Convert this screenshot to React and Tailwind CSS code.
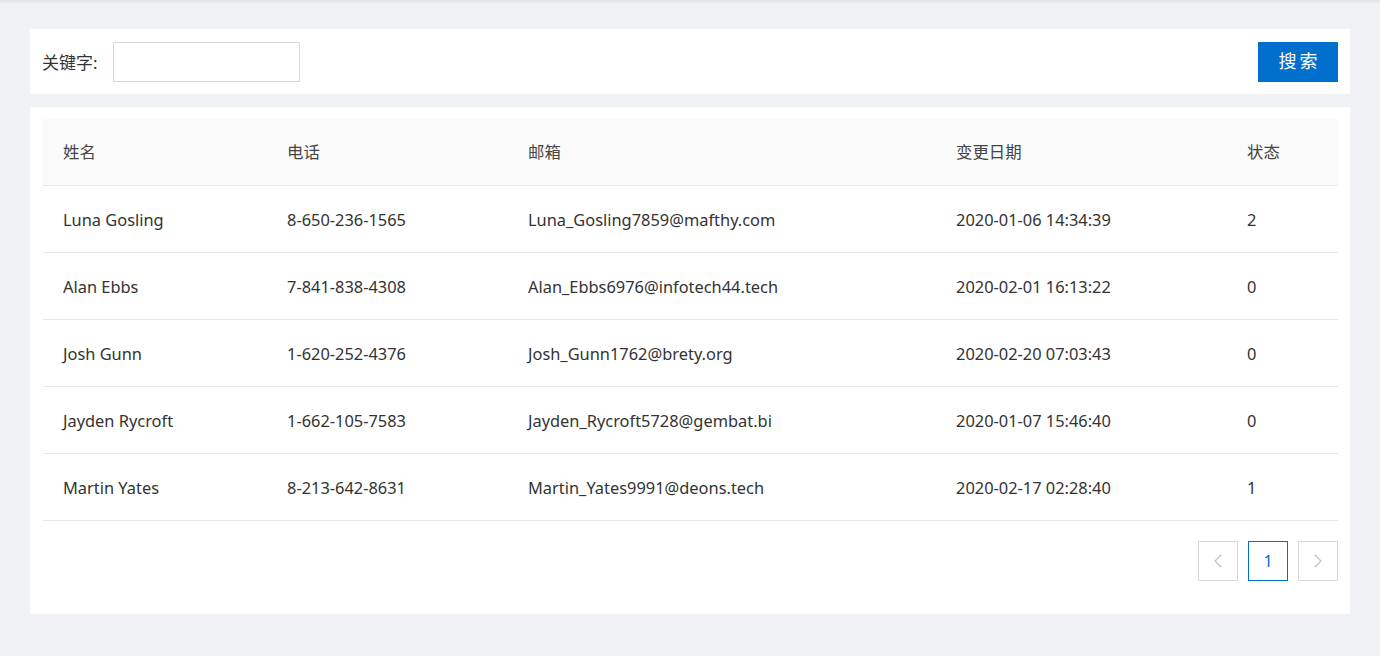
import { ChevronLeft, ChevronRight } from "lucide-react";

const rows = [
  ["Luna Gosling", "8-650-236-1565", "Luna_Gosling7859@mafthy.com", "2020-01-06 14:34:39", "2"],
  ["Alan Ebbs", "7-841-838-4308", "Alan_Ebbs6976@infotech44.tech", "2020-02-01 16:13:22", "0"],
  ["Josh Gunn", "1-620-252-4376", "Josh_Gunn1762@brety.org", "2020-02-20 07:03:43", "0"],
  ["Jayden Rycroft", "1-662-105-7583", "Jayden_Rycroft5728@gembat.bi", "2020-01-07 15:46:40", "0"],
  ["Martin Yates", "8-213-642-8631", "Martin_Yates9991@deons.tech", "2020-02-17 02:28:40", "1"],
];

const cols = "grid grid-cols-[224px_241px_428px_291px_1fr]";

export default function App() {
  return (
    <div
      className="min-h-[656px] bg-[#f0f2f5] text-[#333] relative"
      style={{ fontFamily: '"Noto Sans", "Noto Sans CJK SC", sans-serif' }}
    >
      <div className="h-[4px] bg-gradient-to-b from-[#e2e4e8] to-[#f0f2f5]" />
      <div className="px-[30px] pt-[25px]">
        {/* search bar */}
        <div className="bg-white h-[65px] pl-[12px] pr-[12px] flex items-center justify-between">
          <div className="flex items-center">
            <span className="text-[17px] w-[71px] pt-[2px]">关键字:</span>
            <input className="w-[187px] h-[40px] border border-[#d9d9d9] outline-none px-2" />
          </div>
          <button className="w-[80px] h-[40px] bg-[#0070cc] text-white text-[18px] tracking-[3px] pl-[3px]">
            搜索
          </button>
        </div>

        {/* table */}
        <div className="bg-white mt-[13px] pl-[13px] pr-[12px] pt-[12px] h-[507px]">
          <div className={`${cols} h-[67px] items-center bg-[#fafafa] border-b border-[#e8e8e8] text-[16.4px] text-[#444]`}>
            <div className="pl-[20px]">姓名</div>
            <div className="pl-[20px]">电话</div>
            <div className="pl-[20px]">邮箱</div>
            <div className="pl-[20px]">变更日期</div>
            <div className="pl-[20px]">状态</div>
          </div>
          {rows.map((r) => (
            <div key={r[0]} className={`${cols} h-[67px] items-center border-b border-[#e8e8e8] text-[16.4px] pt-[2px]`}>
              {r.map((c, i) => (
                <div key={i} className="pl-[20px]">{c}</div>
              ))}
            </div>
          ))}
          <div className="flex justify-end gap-[10px] mt-[20px]">
            <div className="w-[40px] h-[40px] border border-[#d9d9d9] flex items-center justify-center text-[#c0c0c0]">
              <ChevronLeft size={24} strokeWidth={1.1} />
            </div>
            <div className="w-[40px] h-[40px] border border-[#0070cc] flex items-center justify-center text-[#0070cc] text-[16px]">
              1
            </div>
            <div className="w-[40px] h-[40px] border border-[#d9d9d9] flex items-center justify-center text-[#c0c0c0]">
              <ChevronRight size={24} strokeWidth={1.1} />
            </div>
          </div>
        </div>
      </div>
    </div>
  );
}
